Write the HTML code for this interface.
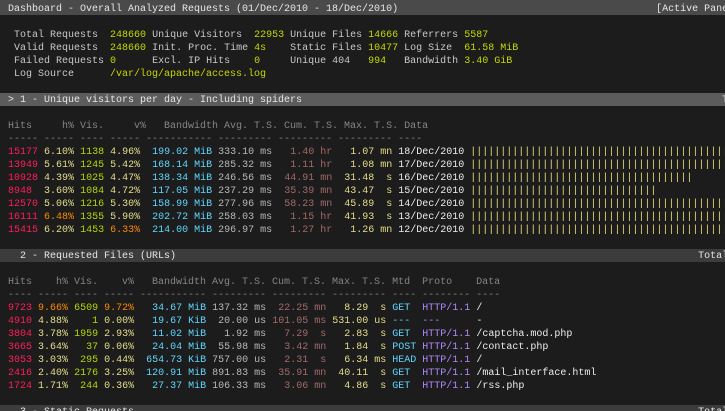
<!DOCTYPE html>
<html><head><meta charset="utf-8"><style>
html,body{margin:0;padding:0;background:#1c1c1c;width:725px;height:411px;overflow:hidden;position:relative}
.bar{position:absolute;left:0;width:725px}
pre{position:absolute;left:2px;top:3px;width:723px;height:408px;overflow:hidden;margin:0;font-family:"Liberation Mono",monospace;font-size:10px;line-height:13px;color:#c8c8c8;white-space:pre}
.t{color:#e6e6e6}.l{color:#c8c8c8}.v{color:#c5d900}
.h{color:#858585}.R{color:#ff1e5a}.K{color:#e6de8a}.L{color:#b5d600}.O{color:#ff8a00}
.C{color:#5fd7ff}.G{color:#b8b8b8}.B{color:#a26a6a}.Y{color:#e6de8a}.W{color:#ececec}
.P{color:#b088ff}.Z{color:#e8dc78}
</style></head><body>
<div class="bar" style="top:0;height:15px;background:#4a4a4a"></div>
<div class="bar" style="top:93px;height:13px;background:#5c5c5c"></div>
<div class="bar" style="top:249px;height:13px;background:#3c3c3c"></div>
<div class="bar" style="top:405px;height:13px;background:#3c3c3c"></div>
<pre><span class="t"> Dashboard - Overall Analyzed Requests (01/Dec/2010 - 18/Dec/2010)                                           [Active Panel]</span>

<span class="l">  Total Requests  </span><span class="v">248660</span> <span class="l">Unique Visitors  </span><span class="v">22953</span> <span class="l">Unique Files </span><span class="v">14666</span> <span class="l">Referrers </span><span class="v">5587</span>
<span class="l">  Valid Requests  </span><span class="v">248660</span> <span class="l">Init. Proc. Time </span><span class="v">4s</span>    <span class="l">Static Files </span><span class="v">10477</span> <span class="l">Log Size  </span><span class="v">61.58 MiB</span>
<span class="l">  Failed Requests </span><span class="v">0</span>      <span class="l">Excl. IP Hits    </span><span class="v">0</span>     <span class="l">Unique 404   </span><span class="v">994</span>   <span class="l">Bandwidth </span><span class="v">3.40 GiB</span>
<span class="l">  Log Source      </span><span class="v">/var/log/apache/access.log</span>

<span class="t"> &gt; 1 - Unique visitors per day - Including spiders                                                                      Total</span>

<span class="h"> Hits     h% Vis.     v%   Bandwidth Avg. T.S. Cum. T.S. Max. T.S. Data</span>
<span class="h"> ----- ----- ---- ----- ----------- --------- --------- --------- ----</span>
 <span class="R">15177</span> <span class="K">6.10%</span> <span class="L">1138</span> <span class="K">4.96%</span>  <span class="C">199.02 MiB</span> <span class="G">333.10 ms</span> <span class="B">  1.40 hr</span> <span class="Y">  1.07 mn</span> <span class="W">18/Dec/2010</span> <span class="Z">||||||||||||||||||||||||||||||||||||||||||||||||||</span>
 <span class="R">13949</span> <span class="K">5.61%</span> <span class="L">1245</span> <span class="K">5.42%</span>  <span class="C">168.14 MiB</span> <span class="G">285.32 ms</span> <span class="B">  1.11 hr</span> <span class="Y">  1.08 mn</span> <span class="W">17/Dec/2010</span> <span class="Z">||||||||||||||||||||||||||||||||||||||||||||||||||</span>
 <span class="R">10928</span> <span class="K">4.39%</span> <span class="L">1025</span> <span class="K">4.47%</span>  <span class="C">138.34 MiB</span> <span class="G">246.56 ms</span> <span class="B"> 44.91 mn</span> <span class="Y"> 31.48  s</span> <span class="W">16/Dec/2010</span> <span class="Z">|||||||||||||||||||||||||||||||||||||</span>
 <span class="R">8948 </span> <span class="K">3.60%</span> <span class="L">1084</span> <span class="K">4.72%</span>  <span class="C">117.05 MiB</span> <span class="G">237.29 ms</span> <span class="B"> 35.39 mn</span> <span class="Y"> 43.47  s</span> <span class="W">15/Dec/2010</span> <span class="Z">|||||||||||||||||||||||||||||||</span>
 <span class="R">12570</span> <span class="K">5.06%</span> <span class="L">1216</span> <span class="K">5.30%</span>  <span class="C">158.99 MiB</span> <span class="G">277.96 ms</span> <span class="B"> 58.23 mn</span> <span class="Y"> 45.89  s</span> <span class="W">14/Dec/2010</span> <span class="Z">||||||||||||||||||||||||||||||||||||||||||||||||||</span>
 <span class="R">16111</span> <span class="O">6.48%</span> <span class="L">1355</span> <span class="K">5.90%</span>  <span class="C">202.72 MiB</span> <span class="G">258.03 ms</span> <span class="B">  1.15 hr</span> <span class="Y"> 41.93  s</span> <span class="W">13/Dec/2010</span> <span class="Z">||||||||||||||||||||||||||||||||||||||||||||||||||</span>
 <span class="R">15415</span> <span class="K">6.20%</span> <span class="L">1453</span> <span class="O">6.33%</span>  <span class="C">214.00 MiB</span> <span class="G">296.97 ms</span> <span class="B">  1.27 hr</span> <span class="Y">  1.26 mn</span> <span class="W">12/Dec/2010</span> <span class="Z">||||||||||||||||||||||||||||||||||||||||||||||||||</span>

<span class="t">   2 - Requested Files (URLs)                                                                                       Total</span>

<span class="h"> Hits    h% Vis.    v%   Bandwidth Avg. T.S. Cum. T.S. Max. T.S. Mtd  Proto    Data</span>
<span class="h"> ---- ----- ---- ----- ----------- --------- --------- --------- ---- -------- ----</span>
 <span class="R">9723</span> <span class="O">9.66%</span> <span class="L">6509</span> <span class="O">9.72%</span>   <span class="C">34.67 MiB</span> <span class="G">137.32 ms</span> <span class="B"> 22.25 mn</span> <span class="Y">  8.29  s</span> <span class="C">GET </span> <span class="P">HTTP/1.1</span> <span class="W">/</span>
 <span class="R">4910</span> <span class="K">4.88%</span> <span class="L">   1</span> <span class="K">0.00%</span>   <span class="C">19.67 KiB</span> <span class="G"> 20.00 us</span> <span class="B">101.05 ms</span> <span class="Y">531.00 us</span> <span class="C">--- </span> <span class="P">---     </span> <span class="W">-</span>
 <span class="R">3804</span> <span class="K">3.78%</span> <span class="L">1959</span> <span class="K">2.93%</span>   <span class="C">11.02 MiB</span> <span class="G">  1.92 ms</span> <span class="B">  7.29  s</span> <span class="Y">  2.83  s</span> <span class="C">GET </span> <span class="P">HTTP/1.1</span> <span class="W">/captcha.mod.php</span>
 <span class="R">3665</span> <span class="K">3.64%</span> <span class="L">  37</span> <span class="K">0.06%</span>   <span class="C">24.04 MiB</span> <span class="G"> 55.98 ms</span> <span class="B">  3.42 mn</span> <span class="Y">  1.84  s</span> <span class="C">POST</span> <span class="P">HTTP/1.1</span> <span class="W">/contact.php</span>
 <span class="R">3053</span> <span class="K">3.03%</span> <span class="L"> 295</span> <span class="K">0.44%</span>  <span class="C">654.73 KiB</span> <span class="G">757.00 us</span> <span class="B">  2.31  s</span> <span class="Y">  6.34 ms</span> <span class="C">HEAD</span> <span class="P">HTTP/1.1</span> <span class="W">/</span>
 <span class="R">2416</span> <span class="K">2.40%</span> <span class="L">2176</span> <span class="K">3.25%</span>  <span class="C">120.91 MiB</span> <span class="G">891.83 ms</span> <span class="B"> 35.91 mn</span> <span class="Y"> 40.11  s</span> <span class="C">GET </span> <span class="P">HTTP/1.1</span> <span class="W">/mail_interface.html</span>
 <span class="R">1724</span> <span class="K">1.71%</span> <span class="L"> 244</span> <span class="K">0.36%</span>   <span class="C">27.37 MiB</span> <span class="G">106.33 ms</span> <span class="B">  3.06 mn</span> <span class="Y">  4.86  s</span> <span class="C">GET </span> <span class="P">HTTP/1.1</span> <span class="W">/rss.php</span>

<span class="t">   3 - Static Requests                                                                                              Total</span></pre>
</body></html>
